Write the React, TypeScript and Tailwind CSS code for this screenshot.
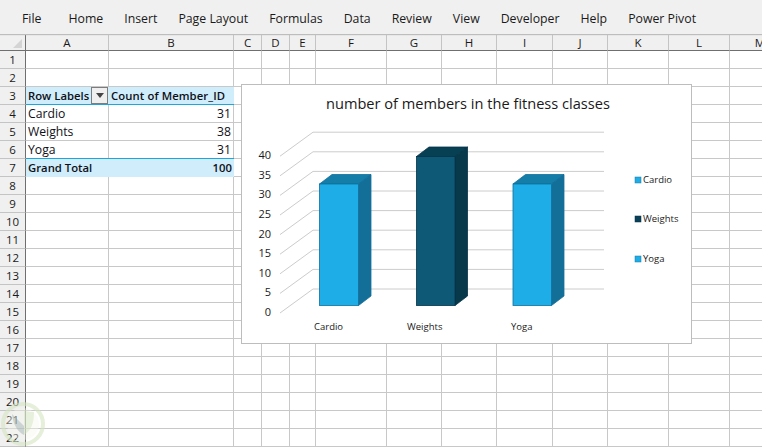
import React from "react";

const menu = ["Home", "Insert", "Page Layout", "Formulas", "Data", "Review", "View", "Developer", "Help", "Power Pivot"];

const columns = [
  { name: "A", width: 83 },
  { name: "B", width: 125 },
  { name: "C", width: 28 },
  { name: "D", width: 28 },
  { name: "E", width: 26 },
  { name: "F", width: 71 },
  { name: "G", width: 55 },
  { name: "H", width: 55 },
  { name: "I", width: 56 },
  { name: "J", width: 55 },
  { name: "K", width: 61 },
  { name: "L", width: 61 },
  { name: "M", width: 61 },
];

const rows = Array.from({ length: 22 }, (_, i) => i + 1);

const pivot: Record<number, { a: string; b: string }> = {
  3: { a: "Row Labels", b: "Count of Member_ID" },
  4: { a: "Cardio", b: "31" },
  5: { a: "Weights", b: "38" },
  6: { a: "Yoga", b: "31" },
  7: { a: "Grand Total", b: "100" },
};

const boldFont = "font-['Open_Sans',sans-serif] text-[11.3px] font-semibold text-[#101018]";
const bodyFont = "font-['Open_Sans',sans-serif] text-[12.2px] text-[#101018]";

function PivotRow({ row }: { row: number }) {
  const p = pivot[row];
  if (row === 3) {
    return (
      <>
        <div className={`h-[18px] flex items-center justify-between bg-[#cfedfa] border-b border-[#1ea5dc] pl-[2px] pr-px ${boldFont}`}>
          <span className="pt-px">{p.a}</span>
          <span className="w-[17px] h-[17px] bg-[#efefef] border border-[#7d7d7d] flex items-center justify-center">
            <svg width="8" height="5" viewBox="0 0 8 5">
              <path d="M0 0h8L4 5z" fill="#444" />
            </svg>
          </span>
        </div>
        <div className={`h-[18px] flex items-center pt-px bg-[#cfedfa] border-b border-[#1ea5dc] pl-[2px] tracking-[0.1px] ${boldFont}`}>{p.b}</div>
      </>
    );
  }
  if (row === 7) {
    return (
      <div className={`col-span-2 h-[18px] flex items-center justify-between bg-[#cfedfa] border-t border-[#1ea5dc] px-[2px] -mt-px box-content ${boldFont}`}>
        <span>{p.a}</span>
        <span>{p.b}</span>
      </div>
    );
  }
  return (
    <>
      <div className={`h-[18px] flex items-center pt-px pl-[2px] border-b border-r border-[#c8c8c8] ${bodyFont}`}>{p.a}</div>
      <div className={`h-[18px] flex items-center justify-end pt-px pr-[2px] border-b border-r border-[#c8c8c8] ${bodyFont}`}>{p.b}</div>
    </>
  );
}

function Sheet() {
  const template = `26px ${columns.map((c) => c.width + "px").join(" ")}`;
  return (
    <div className="grid" style={{ gridTemplateColumns: template }}>
      <div className="h-[16px] bg-[#f0f0f0] border-r border-b border-[#6f6f6f] flex items-end justify-end pr-[3px] pb-[2px]">
        <svg width="9" height="9" viewBox="0 0 9 9">
          <path d="M9 0v9H0z" fill="#d4d4d4" />
        </svg>
      </div>
      {columns.map((c) => (
        <div
          key={c.name}
          className="h-[16px] bg-[#f0f0f0] border-r border-r-[#c4c4c4] border-b border-b-[#6f6f6f] flex items-center justify-center font-['Open_Sans',sans-serif] text-[11.5px] text-[#1a1a1a]"
        >
          {c.name}
        </div>
      ))}
      {rows.map((r) => (
        <React.Fragment key={r}>
          <div className="h-[18px] bg-[#f0f0f0] border-r border-r-[#6f6f6f] border-b border-b-[#c4c4c4] flex items-center justify-center font-['Open_Sans',sans-serif] text-[11.5px] text-[#1a1a1a]">
            {r}
          </div>
          {pivot[r] ? (
            <PivotRow row={r} />
          ) : (
            columns.slice(0, 2).map((c) => (
              <div key={c.name} className="h-[18px] border-r border-b border-[#c8c8c8]" />
            ))
          )}
          {columns.slice(2).map((c) => (
            <div key={c.name} className="h-[18px] border-r border-b border-[#c8c8c8]" />
          ))}
        </React.Fragment>
      ))}
    </div>
  );
}

// coordinates below are relative to the page, the viewBox shifts them into the chart box
const OX = 241;
const OY = 84;

function Bar({ x0, x1, top, front, side, roof, edge }: { x0: number; x1: number; top: number; front: string; side: string; roof: string; edge: string }) {
  const bottom = 305.5;
  const dx = 12.5;
  const dy = 9.5;
  return (
    <g>
      <path d={`M${x0} ${top}L${x0 + dx} ${top - dy}H${x1 + dx}L${x1} ${top}Z`} fill={roof} stroke={edge} strokeWidth="0.8" />
      <path d={`M${x1} ${top}L${x1 + dx} ${top - dy}V${bottom - dy}L${x1} ${bottom}Z`} fill={side} stroke={edge} strokeWidth="0.8" />
      <rect x={x0} y={top} width={x1 - x0} height={bottom - top} fill={front} stroke={edge} strokeWidth="0.8" />
    </g>
  );
}

function ChartDrawing() {
  const ticks = [0, 5, 10, 15, 20, 25, 30, 35, 40];
  return (
    <svg width="449" height="258" viewBox={`${OX + 1} ${OY + 1} 449 258`} className="block">
      {ticks.map((t, i) => {
        const y = 313 - i * 19.6;
        return (
          <g key={t}>
            <path d={`M280 ${y}L313 ${y - 24}H604`} fill="none" stroke="#cccccc" strokeWidth="1" />
            <text x="271" y={y + 3} textAnchor="end" fontSize="11" fontFamily="Open Sans, sans-serif" fill="#1a1a1a">
              {t}
            </text>
          </g>
        );
      })}
      <Bar x0={319.5} x1={358.5} top={184} front="#1eade6" side="#136f97" roof="#147ea9" edge="#0f6f9c" />
      <Bar x0={416.5} x1={455} top={156.5} front="#0e5a76" side="#07394a" roof="#073f53" edge="#06324a" />
      <Bar x0={513} x1={551.5} top={184} front="#1eade6" side="#136f97" roof="#147ea9" edge="#0f6f9c" />
      <text x="314" y="330" fontSize="9.5" fontFamily="Open Sans, sans-serif" fill="#1a1a1a">Cardio</text>
      <text x="407" y="330" fontSize="9.5" fontFamily="Open Sans, sans-serif" fill="#1a1a1a">Weights</text>
      <text x="511" y="330" fontSize="9.5" fontFamily="Open Sans, sans-serif" fill="#1a1a1a">Yoga</text>
      <rect x="635" y="177" width="6" height="6" fill="#1eade6" stroke="#147ea9" strokeWidth="0.5" />
      <text x="643" y="183" fontSize="9.5" fontFamily="Open Sans, sans-serif" fill="#1a1a1a">Cardio</text>
      <rect x="635" y="216" width="6" height="6" fill="#0a4058" stroke="#06324a" strokeWidth="0.5" />
      <text x="643" y="222" fontSize="9.5" fontFamily="Open Sans, sans-serif" fill="#1a1a1a">Weights</text>
      <rect x="635" y="256" width="6" height="6" fill="#1eade6" stroke="#147ea9" strokeWidth="0.5" />
      <text x="643" y="262" fontSize="9.5" fontFamily="Open Sans, sans-serif" fill="#1a1a1a">Yoga</text>
    </svg>
  );
}

export default function App() {
  return (
    <div className="w-[762px] h-[447px] overflow-hidden relative bg-white">
      <div className="h-[34px] bg-[#f0f0f0] flex items-center pt-[4px] pl-[22px] font-['Open_Sans',sans-serif] text-[12.3px] text-[#1a1a1a] shadow-[0_1px_1px_#bdbdbd] relative z-10">
        <span className="mr-[27px]">File</span>
        <div className="flex gap-[21px]">
          {menu.map((m) => (
            <span key={m}>{m}</span>
          ))}
        </div>
      </div>
      <div className="pt-px">
        <Sheet />
      </div>

      {/* chart floats over the cells */}
      <div className="absolute left-[241px] top-[84px] w-[451px] h-[260px] bg-white border border-[#bdbdbd]">
        <div className="absolute top-0 left-0">
          <ChartDrawing />
        </div>
        <div className="absolute left-[84px] top-[8px] font-['Open_Sans',sans-serif] text-[14.6px] text-[#1a1a1a] whitespace-nowrap">
          number of members in the fitness classes
        </div>
      </div>

      {/* watermark */}
      <svg width="46" height="46" viewBox="0 0 46 46" className="absolute left-0 top-[401px]">
        <circle cx="23" cy="23" r="20" fill="none" stroke="#d3e4bf" strokeWidth="4" opacity="0.6" />
        <circle cx="23" cy="23" r="16" fill="#f4f8ee" opacity="0.4" />
        <path d="M24 9c4 2 7 2 10 2 0 10-2 18-10 23z" fill="#cfe2bb" opacity="0.45" />
        <path d="M12 13l12 12v9c-6-3-11-10-12-21z" fill="#93a6ab" opacity="0.4" />
      </svg>
    </div>
  );
}
